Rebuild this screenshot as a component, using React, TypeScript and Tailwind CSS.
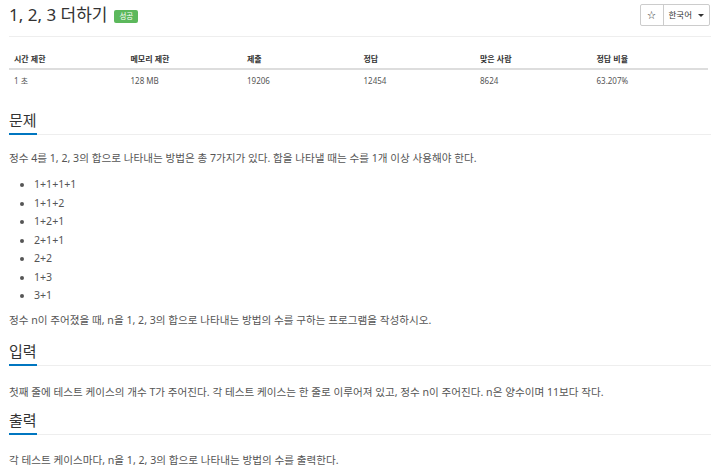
import React from 'react';

const stats = [
  { label: '시간 제한', value: '1 초' },
  { label: '메모리 제한', value: '128 MB' },
  { label: '제출', value: '19206' },
  { label: '정답', value: '12454' },
  { label: '맞은 사람', value: '8624' },
  { label: '정답 비율', value: '63.207%' },
];

const ways = ['1+1+1+1', '1+1+2', '1+2+1', '2+1+1', '2+2', '1+3', '3+1'];

const SectionTitle: React.FC<{ title: string; className?: string }> = ({ title, className }) => (
  <div className={`border-b border-[#eee] ${className ?? ''}`}>
    <span className="inline-block text-[15px] leading-[20px] text-[#333] pb-[3px] border-b-2 border-[#0076c0] mb-[-1px]">
      {title}
    </span>
  </div>
);

export default function App() {
  return (
    <div className="w-[720px] h-[470px] overflow-hidden bg-white px-[9px] text-[#555] font-['Noto_Sans','Noto_Sans_CJK_KR',sans-serif]">
      {/* header */}
      <div className="flex justify-between items-start h-[37px] border-b border-[#eee]">
        <div className="flex items-center gap-[7px] pt-[2px]">
          <h1 className="text-[17px] leading-[26px] text-[#333]">1, 2, 3 더하기</h1>
          <span className="bg-[#5cb85c] text-white text-[7.5px] leading-[9px] px-[5px] py-[2px] rounded-[2px] mt-[3px]">
            성공
          </span>
        </div>
        <div className="mt-[4px] mr-[1px] flex h-[22px] border border-[#ccc] rounded-[2px] text-[8.5px] text-[#333]">
          <span className="w-[22px] flex items-center justify-center">☆</span>
          <span className="flex items-center gap-[6px] border-l border-[#ccc] px-[5px]">
            한국어
            <span className="w-0 h-0 border-l-[3px] border-r-[3px] border-t-[3px] border-l-transparent border-r-transparent border-t-[#333]" />
          </span>
        </div>
      </div>

      {/* stats table */}
      <div className="mt-[12px] mr-[3px] text-[8px]">
        <div className="grid grid-cols-6 h-[21px] items-center border-b-2 border-[#ddd] font-bold text-[#333]">
          {stats.map((s) => (
            <div key={s.label} className="pl-[5px]">{s.label}</div>
          ))}
        </div>
        <div className="grid grid-cols-6 h-[22px] items-center">
          {stats.map((s) => (
            <div key={s.label} className="pl-[5px]">{s.value}</div>
          ))}
        </div>
      </div>

      {/* 문제 */}
      <SectionTitle title="문제" className="mt-[16px]" />
      <p className="mt-[15px] text-[10.6px] leading-[16px]">
        정수 4를 1, 2, 3의 합으로 나타내는 방법은 총 7가지가 있다. 합을 나타낼 때는 수를 1개 이상 사용해야 한다.
      </p>
      <ul className="mt-[9px] list-disc pl-[25px] text-[10.6px] leading-[18.5px]">
        {ways.map((w) => (
          <li key={w}>{w}</li>
        ))}
      </ul>
      <p className="mt-[7px] text-[10.6px] leading-[16px]">
        정수 n이 주어졌을 때, n을 1, 2, 3의 합으로 나타내는 방법의 수를 구하는 프로그램을 작성하시오.
      </p>

      {/* 입력 */}
      <SectionTitle title="입력" className="mt-[11px]" />
      <p className="mt-[18px] text-[10.6px] leading-[16px]">
        첫째 줄에 테스트 케이스의 개수 T가 주어진다. 각 테스트 케이스는 한 줄로 이루어져 있고, 정수 n이 주어진다. n은 양수이며 11보다 작다.
      </p>

      {/* 출력 */}
      <SectionTitle title="출력" className="mt-[8px]" />
      <p className="mt-[17px] text-[10.6px] leading-[16px]">
        각 테스트 케이스마다, n을 1, 2, 3의 합으로 나타내는 방법의 수를 출력한다.
      </p>
    </div>
  );
}
